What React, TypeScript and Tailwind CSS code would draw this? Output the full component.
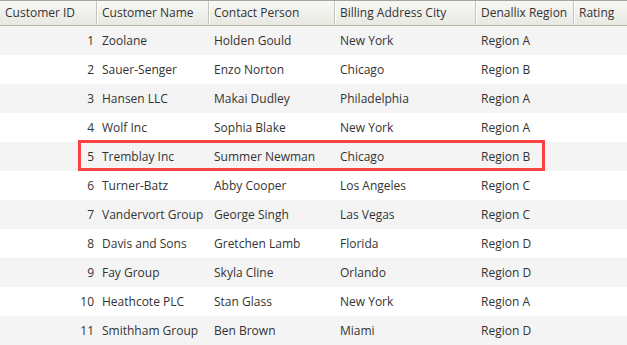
import React from 'react';

const columns = ['Customer ID', 'Customer Name', 'Contact Person', 'Billing Address City', 'Denallix Region', 'Rating'];

const rows = [
  [1, 'Zoolane', 'Holden Gould', 'New York', 'Region A'],
  [2, 'Sauer-Senger', 'Enzo Norton', 'Chicago', 'Region B'],
  [3, 'Hansen LLC', 'Makai Dudley', 'Philadelphia', 'Region A'],
  [4, 'Wolf Inc', 'Sophia Blake', 'New York', 'Region A'],
  [5, 'Tremblay Inc', 'Summer Newman', 'Chicago', 'Region B'],
  [6, 'Turner-Batz', 'Abby Cooper', 'Los Angeles', 'Region C'],
  [7, 'Vandervort Group', 'George Singh', 'Las Vegas', 'Region C'],
  [8, 'Davis and Sons', 'Gretchen Lamb', 'Florida', 'Region D'],
  [9, 'Fay Group', 'Skyla Cline', 'Orlando', 'Region D'],
  [10, 'Heathcote PLC', 'Stan Glass', 'New York', 'Region A'],
  [11, 'Smithham Group', 'Ben Brown', 'Miami', 'Region D'],
];

const grid = 'grid grid-cols-[97px_112px_126px_141px_98px_1fr]';

export default function App() {
  return (
    <div
      className="relative w-[627px] h-[345px] overflow-hidden bg-white text-[12px] text-[#333]"
      style={{ fontFamily: '"Open Sans", "Liberation Sans", sans-serif' }}
    >
      {/* header */}
      <div className={`${grid} h-[26px] border-t border-b border-t-[#a5a5a0] border-b-[#b8b6aa] bg-gradient-to-b from-[#f7f7f4] to-[#e9e9e3]`}>
        {columns.map((c, i) => (
          <div
            key={c}
            className={`flex items-center px-[5px] whitespace-nowrap ${i < columns.length - 1 ? 'border-r border-[#c6c4b8] shadow-[1px_0_0_#fff]' : ''}`}
          >
            {c}
          </div>
        ))}
      </div>

      {/* body */}
      {rows.map((r, idx) => (
        <div key={r[0]} className={`${grid} h-[29px] ${idx % 2 === 0 ? 'bg-[#f4f4f4]' : 'bg-white'}`}>
          <div className="flex items-center justify-end pr-[3px]">{r[0]}</div>
          <div className="flex items-center pl-[5px] whitespace-nowrap">{r[1]}</div>
          <div className="flex items-center pl-[5px] whitespace-nowrap">{r[2]}</div>
          <div className="flex items-center pl-[5px] whitespace-nowrap">{r[3]}</div>
          <div className="flex items-center pl-[5px] whitespace-nowrap">{r[4]}</div>
          <div />
        </div>
      ))}

      {/* highlight box around row 5 */}
      <div className="absolute left-[78px] top-[140px] w-[467px] h-[31px] border-[3px] border-[#fb4143]" />
    </div>
  );
}
